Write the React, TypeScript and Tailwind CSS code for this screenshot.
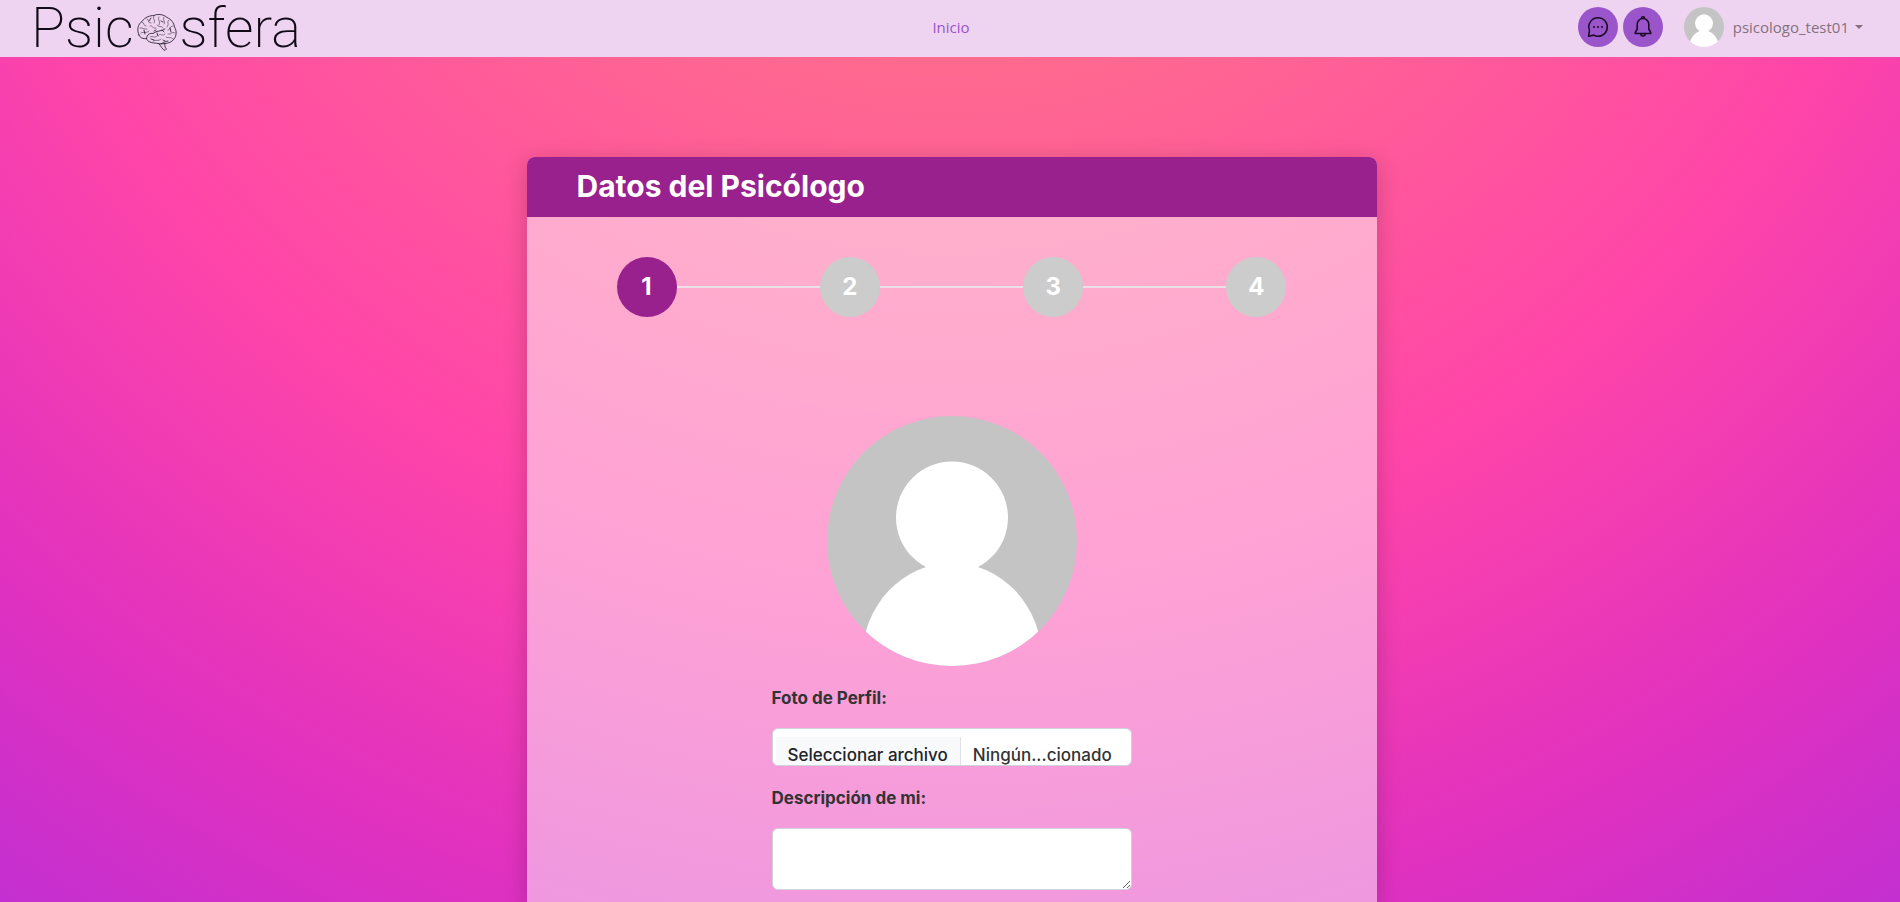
import { useId } from "react";

function Brain({ className }: { className: string }) {
  return (
    <svg viewBox="0 0 40 38" className={className} fill="none" stroke="#1a1020" strokeWidth="0.8" strokeLinecap="round" strokeLinejoin="round" aria-hidden="true">
      <path d="M2 22C-.5 17 1 11 5 8.500C8 4 13 2.500 17 2.500C21 .5 27 1.500 30 4.500C34 6 37 10 37.500 14C40 18 39.500 23 37 26C35 29 31 30.500 28 30.500C24 31.500 20 30 17 30C13 29.500 10 28 9.500 25.500C6 26 3 25 2 22Z" />
      <path d="M9.500 25.500C10 21 13 20 16 20.500C20 17 24 19 28 16M22 31C24 33 25 36 28 37.500L29.500 36C28 34 27 32 28 30.500M24 31C26 30 27 28.500 31 28" />
      <path d="M5 9C8 10 6 13 9 13M3 15C6 14 7 17 10 16M4 20C7 18 9 21 12 18M10 6C13 7 10 10 14 10M17 3C15 6 19 7 17 10M13 13C16 12 15 16 19 15M22 4C20 7 24 8 22 12M27 4C25 7 29 8 27 11M32 7C29 9 33 11 30 14M36 13C32 13 34 17 31 17M38 20C34 18 35 22 31 21M36 26C33 23 32 26 29 24M20 12C22 15 24 12 26 15M13 24C16 22 17 26 20 23M22 22C24 20 25 24 28 21M16 28C19 26 21 29 24 26" strokeWidth="0.5" />
      <path d="M7 17l1 4M12 8l2-3M19 17l-2 1M25 17l2 2M33 15l1 4M26 27l2 1M14 26l3 1M20 20l1 3M24 8l2 1" strokeWidth="0.8" />
    </svg>
  );
}

function Avatar({ className }: { className: string }) {
  const clip = useId();
  return (
    <svg viewBox="0 0 250 250" className={className} role="img" aria-label="Foto de perfil">
      <clipPath id={clip}>
        <circle cx="125" cy="125" r="125" />
      </clipPath>
      <g clipPath={`url(#${clip})`}>
        <rect width="250" height="250" fill="#c4c4c4" />
        <circle cx="125" cy="101.500" r="56" fill="#fff" />
        <ellipse cx="125" cy="243" rx="90" ry="96" fill="#fff" />
      </g>
    </svg>
  );
}

function ChatIcon() {
  return (
    <svg viewBox="0 0 24 24" className="size-6" fill="none" stroke="#1a0a26" strokeWidth="1.6" strokeLinecap="round" strokeLinejoin="round" aria-hidden="true">
      <path d="M12 2.800a9.200 9.200 0 1 1-4.300 17.300L2.600 21.200 3.500 15.500A9.200 9.200 0 0 1 12 2.800Z" />
      <path d="M8 12h.01M12 12h.01M16 12h.01" strokeWidth="2" />
    </svg>
  );
}

function BellIcon() {
  return (
    <svg viewBox="0 0 24 24" className="size-6" fill="none" stroke="#1a0a26" strokeWidth="1.6" strokeLinecap="round" strokeLinejoin="round" aria-hidden="true">
      <path d="M12 3.500a5.800 5.800 0 0 0-5.800 5.800V14L4.300 17.500c-.3.6 0 1 .6 1h14.200c.6 0 .9-.4.6-1L17.800 14V9.300A5.800 5.800 0 0 0 12 3.500Z" />
      <path d="M10.500 3.300a1.500 1.500 0 0 1 3 0M9.800 18.800a2.200 2.200 0 0 0 4.400 0" />
    </svg>
  );
}

const steps = [1, 2, 3, 4];

export default function App() {
  return (
    <div className="flex min-h-screen flex-col bg-[radial-gradient(circle_at_50%_-440px,#ff6b8e_480px,#ff45a9_1004px,#e131bf_1376px,#c02fd2_1670px)] font-['Inter',sans-serif]">
      <header className="grid h-[57px] grid-cols-3 items-center bg-[#eed4f1] pr-[37px] pb-[3px] pl-[31px] font-['Open_Sans',sans-serif] text-[15px]">
        <a href="#" aria-label="Psicosfera" className="flex items-center pt-0.5 font-['Roboto',sans-serif] text-[56px] leading-[50px] font-extralight text-[#120a18]">
          <span>Psic</span>
          <Brain className="mx-[3px] mt-2 h-[38px] w-10" />
          <span>sfera</span>
        </a>
        <nav className="flex justify-center pl-2">
          <a href="#" className="text-[#9b55cb]">Inicio</a>
        </nav>
        <div className="flex items-center justify-end">
          <button type="button" aria-label="Mensajes" className="flex size-10 items-center justify-center rounded-full bg-[#9b55cb]">
            <ChatIcon />
          </button>
          <button type="button" aria-label="Notificaciones" className="ml-[5px] flex size-10 items-center justify-center rounded-full bg-[#9b55cb]">
            <BellIcon />
          </button>
          <button type="button" className="ml-[21px] flex items-center text-[#85717d]">
            <Avatar className="size-10" />
            <span className="ml-[9px]">psicologo_test01</span>
            <span className="ml-[6px] border-x-4 border-t-4 border-x-transparent border-t-[#85717d]" />
          </button>
        </div>
      </header>

      <main className="flex flex-1 justify-center pt-[100px] pl-[3px]">
        <section className="flex w-[850px] max-w-full flex-col rounded-t-lg bg-white/50 shadow-[0_5px_24px_rgba(0,0,0,0.2)]">
          <h1 className="rounded-t-lg bg-[#98218d] px-[50px] pb-0.5 text-[30px] leading-[58px] font-bold text-white">Datos del Psicólogo</h1>
          <form className="flex flex-col items-center px-[90px] pt-10 pb-3">
            <ol className="flex w-full items-center">
              {steps.map((n) => (
                <li key={n} className={n === 1 ? "flex items-center" : "flex flex-1 items-center"}>
                  {n > 1 && <span className="h-0.5 flex-1 bg-[#ecdfe6]" />}
                  <span className={`flex size-[60px] items-center justify-center rounded-full text-2xl font-bold text-white ${n === 1 ? "bg-[#98218d]" : "bg-[#cccccc]"}`}>{n}</span>
                </li>
              ))}
            </ol>
            <Avatar className="mt-[99px] size-[250px]" />
            <div className="mt-5 flex w-[360px] flex-col text-[#333333]">
              <label htmlFor="foto" className="text-[17px] leading-6 font-bold">Foto de Perfil:</label>
              <label htmlFor="foto" className="mt-[18px] flex h-[38px] overflow-hidden rounded-md border border-[#ced4da] bg-white pt-2 pl-[3px] text-[17px] font-medium">
                <input id="foto" type="file" className="sr-only" />
                <span className="h-10 border-r border-[#dee2e6] bg-[#f8f9fa] px-3 leading-9 text-[#212529]">Seleccionar archivo</span>
                <span className="pl-3 leading-9">Ningún...cionado</span>
              </label>
              <label htmlFor="descripcion" className="mt-5 text-[17px] leading-6 font-bold">Descripción de mi:</label>
              <textarea id="descripcion" className="mt-[18px] h-[62px] w-full resize rounded-md border border-[#ced4da] bg-white p-2" />
            </div>
          </form>
        </section>
      </main>
    </div>
  );
}
